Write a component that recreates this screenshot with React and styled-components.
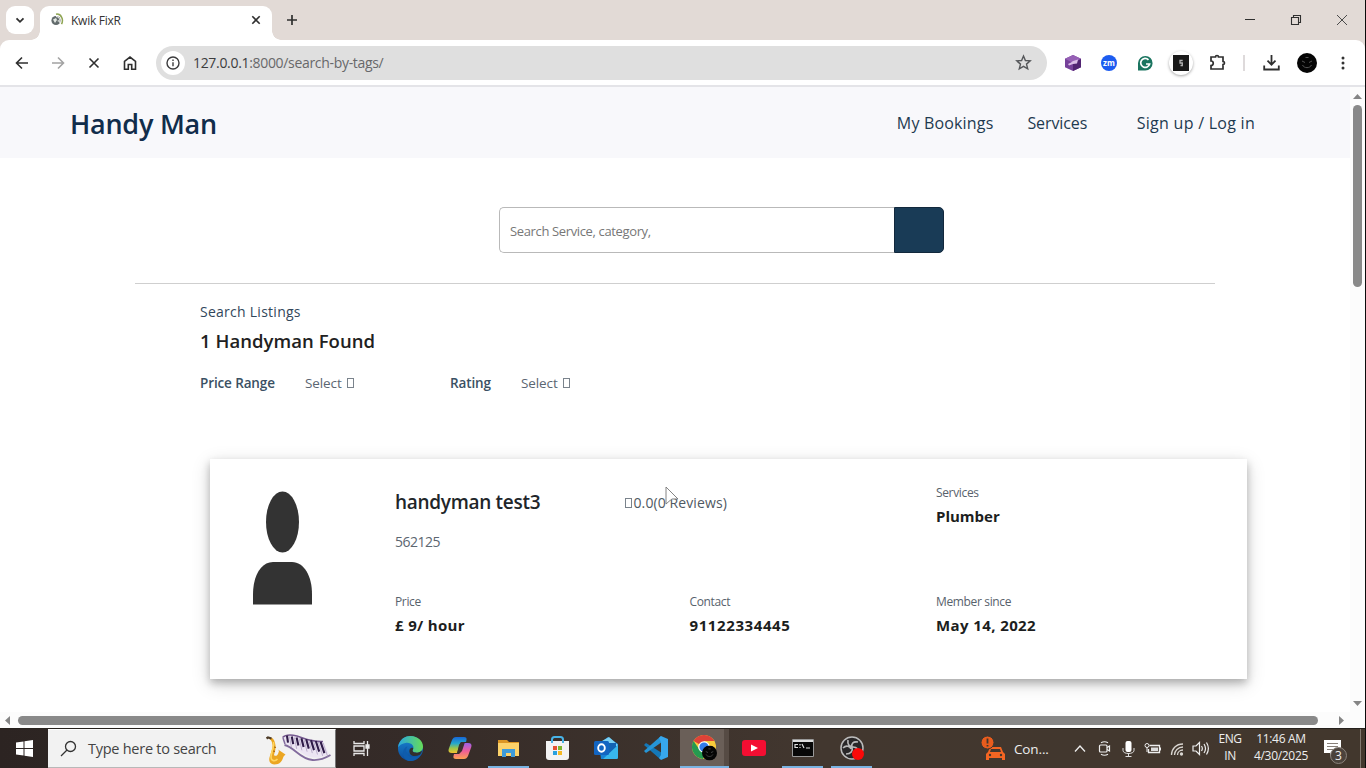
import React from "react";
import styled, { createGlobalStyle } from "styled-components";

const Global = createGlobalStyle`
  * { box-sizing: border-box; }
  body { margin: 0; overflow: hidden; background: #fff; }
  svg { display: block; flex: none; }
`;

const Desktop = styled.div`
  width: 1366px;
  height: 768px;
  display: flex;
  flex-direction: column;
  overflow: hidden;
  border-right: 1px solid #0b0b0b;
  font-family: "Open Sans", "Noto Sans", sans-serif;
  color: #222;
`;

/* ---------- browser chrome ---------- */
const TabStrip = styled.div`
  height: 40px;
  flex: none;
  display: flex;
  background: #e2dad6;
`;
const TabSearch = styled.div`
  width: 28px;
  height: 28px;
  margin: 6px 6px 0;
  border-radius: 9px;
  background: #fff;
  display: grid;
  place-items: center;
`;
const Tab = styled.div`
  position: relative;
  width: 232px;
  height: 34px;
  margin-top: 6px;
  padding: 0 10px 6px 10px;
  border-radius: 9px 9px 0 0;
  background: #fff;
  display: flex;
  align-items: center;
  &::before, &::after {
    content: "";
    position: absolute;
    bottom: 0;
    width: 9px;
    height: 9px;
  }
  &::before { left: -9px; background: radial-gradient(circle at 0 0, transparent 8.5px, #fff 9px); }
  &::after { right: -9px; background: radial-gradient(circle at 100% 0, transparent 8.5px, #fff 9px); }
`;
const TabTitle = styled.div`
  flex: 1;
  margin-left: 7px;
  font-size: 12px;
  letter-spacing: -0.25px;
  color: #333;
`;
const NewTab = styled.div`
  width: 40px;
  display: grid;
  place-items: center;
`;
const WindowButtons = styled.div`
  margin-left: auto;
  display: flex;
`;
const WindowButton = styled.div`
  width: 46px;
  height: 40px;
  display: grid;
  place-items: center;
`;
const ToolbarBack = styled.div`
  flex: none;
  background: #e2dad6;
`;
const Toolbar = styled.div`
  height: 47px;
  padding: 0 4px;
  display: flex;
  align-items: center;
  background: #fff;
  border-radius: 9px 9px 0 0;
  border-bottom: 2px solid #e4e4e8;
`;
const ToolCell = styled.div`
  width: 36px;
  height: 36px;
  display: grid;
  place-items: center;
`;
const Omnibox = styled.div`
  width: 891px;
  height: 34px;
  margin: 0 8px;
  padding: 0 15px 0 5px;
  border-radius: 17px;
  background: #dfdfdf;
  display: flex;
  align-items: center;
`;
const SiteInfo = styled.div`
  width: 24px;
  height: 24px;
  border-radius: 50%;
  background: #fff;
  display: grid;
  place-items: center;
`;
const Url = styled.div`
  flex: 1;
  margin-left: 8px;
  font-size: 14px;
  letter-spacing: -0.32px;
  color: #68686a;
  span { color: #3c3c3e; }
`;
const ToolDivider = styled.div`
  width: 2px;
  height: 16px;
  margin: 0 8px;
  background: #dedadb;
`;
const ShadowDisc = styled.div`
  width: 24px;
  height: 24px;
  border-radius: 50%;
  box-shadow: 0 1px 3px rgba(0, 0, 0, 0.35);
  display: grid;
  place-items: center;
`;

/* ---------- page ---------- */
const Viewport = styled.div`
  flex: 1;
  min-height: 0;
  display: grid;
  grid-template: 1fr 16px / 1fr 15px;
`;
const Page = styled.main`
  background: #fff;
  overflow: hidden;
`;
const VScroll = styled.div`
  display: flex;
  flex-direction: column;
  align-items: center;
  padding: 5px 0 4px;
  background: #fcfcfc;
`;
const VThumb = styled.div`
  width: 9px;
  height: 182px;
  margin: 4px 0 auto;
  border-radius: 5px;
  background: #898989;
`;
const HScroll = styled.div`
  grid-column: 1 / -1;
  display: flex;
  align-items: center;
  padding: 0 20px 0 4px;
  background: #fcfcfc;
`;
const HThumb = styled.div`
  width: 1300px;
  height: 9px;
  margin: 0 auto 0 5px;
  border-radius: 5px;
  background: #898989;
`;
const SiteHeader = styled.header`
  height: 71px;
  padding: 0 95px 0 70px;
  display: flex;
  align-items: center;
  background: #f8f8fb;
`;
const Brand = styled.div`
  margin-right: auto;
  padding-top: 3px;
  font-size: 27px;
  line-height: 36px;
  font-weight: 600;
  letter-spacing: -0.25px;
  color: #112d4b;
`;
const NavLink = styled.div`
  margin-left: ${(p) => p.$gap || 0}px;
  font-size: 16px;
  letter-spacing: ${(p) => p.$track}px;
  color: #1e3a50;
`;
const SearchRow = styled.div`
  display: flex;
  width: 445px;
  height: 46px;
  margin: 49px 0 30px 499px;
`;
const SearchField = styled.div`
  flex: 1;
  padding: 2px 0 0 10px;
  border: 1px solid #b9b9b9;
  border-right: 0;
  border-radius: 5px 0 0 5px;
  display: flex;
  align-items: center;
  font-size: 13px;
  letter-spacing: -0.36px;
  color: #777;
`;
const SearchButton = styled.div`
  width: 50px;
  border: 1px solid #12283c;
  border-radius: 0 5px 5px 0;
  background: #193b56;
`;
const Rule = styled.div`
  height: 1px;
  margin: 0 135px;
  background: #cfcfcf;
`;
const Listing = styled.section`
  padding: 17px 0 0 200px;
`;
const Caption = styled.div`
  font-size: 14px;
  line-height: 22px;
  font-weight: 500;
  letter-spacing: 0.26px;
  color: #32475b;
`;
const Found = styled.div`
  margin-top: 5px;
  font-size: 18.5px;
  line-height: 26px;
  font-weight: 600;
  letter-spacing: 0.05px;
  color: #212121;
`;
const Filters = styled.div`
  margin-top: 18px;
  display: flex;
  line-height: 20px;
`;
const Filter = styled.div`
  width: ${(p) => p.$width}px;
  padding-top: ${(p) => p.$drop || 0}px;
  display: flex;
  align-items: center;
`;
const FilterName = styled.div`
  font-size: 13.5px;
  font-weight: 600;
  width: ${(p) => p.$width}px;
  letter-spacing: -0.12px;
  color: #3a5063;
`;
const FilterValue = styled.div`
  display: flex;
  align-items: center;
  gap: 5px;
  font-size: 13.5px;
  letter-spacing: -0.1px;
  color: #5b6672;
`;
const MissingGlyph = styled.i`
  width: 7px;
  height: 10px;
  border: 1px solid #7a838c;
`;
const Card = styled.article`
  width: 1037px;
  height: 220px;
  margin: 66px 0 0 10px;
  padding: 25px 0 0 43px;
  display: flex;
  background: #fff;
  box-shadow: 0 4px 8px rgba(0, 0, 0, 0.24), 0 5px 18px rgba(0, 0, 0, 0.16);
`;
const Avatar = styled.div`
  width: 142px;
  padding-top: 7px;
`;
const Details = styled.div`
  flex: 1;
`;
const DetailRow = styled.div`
  display: flex;
  height: ${(p) => p.$height}px;
`;
const Cell = styled.div`
  width: ${(p) => p.$width}px;
`;
const Name = styled.div`
  padding-top: 5px;
  font-size: 19px;
  line-height: 26px;
  font-weight: 600;
  letter-spacing: -0.3px;
  color: #212529;
`;
const Postcode = styled.div`
  margin-top: 17px;
  font-size: 14px;
  line-height: 20px;
  letter-spacing: -0.5px;
  color: #5c6670;
`;
const Reviews = styled.div`
  padding-top: 9px;
  display: flex;
  align-items: center;
  font-size: 14px;
  line-height: 20px;
  letter-spacing: 0.1px;
  color: #4f5963;
`;
const Label = styled.div`
  font-size: 12px;
  line-height: 18px;
  letter-spacing: -0.35px;
  color: #58626c;
`;
const Value = styled.div`
  margin-top: 3px;
  font-size: 15px;
  line-height: 22px;
  font-weight: 700;
  letter-spacing: ${(p) => p.$track || 0}px;
  color: #1c1e20;
`;
const Pointer = styled.div`
  position: absolute;
  left: 665px;
  top: 486px;
`;

/* ---------- taskbar ---------- */
const Taskbar = styled.footer`
  height: 40px;
  flex: none;
  display: flex;
  background: linear-gradient(90deg, #2c2422 0, #352b28 30%, #42372f 60%, #42372d 100%);
  border-top: 1px solid #26211d;
  color: #eee;
`;
const StartButton = styled.div`
  width: 48px;
  display: grid;
  place-items: center;
`;
const TaskSearch = styled.div`
  width: 288px;
  margin-right: 1px;
  padding: 0 4px 0 12px;
  display: flex;
  align-items: center;
  background: #f2f2f2;
  border-top: 1px solid #fff;
  border-bottom: 1px solid #b8b8b8;
  border-right: 1px solid #777;
`;
const TaskSearchText = styled.div`
  flex: 1;
  margin-left: 11px;
  font-size: 14.5px;
  letter-spacing: -0.26px;
  color: #444;
`;
const TaskItem = styled.div`
  width: 49px;
  padding: 0 4px 1px;
  display: grid;
  place-items: center;
  background: ${(p) => (p.$active ? "linear-gradient(90deg, #6a5f58 44px, #564b44 44px)" : "transparent")};
  box-shadow: ${(p) => (p.$active ? "inset 0 -2px #79b3e2" : "none")};
`;
const RunningItem = styled(TaskItem)`
  background: linear-gradient(#79b3e2, #79b3e2) 4px bottom / 41px 2px no-repeat;
`;
const Tray = styled.div`
  margin-left: auto;
  display: flex;
  align-items: center;
`;
const News = styled.div`
  width: 87px;
  display: flex;
  align-items: center;
  gap: 8px;
  font-size: 13.5px;
  letter-spacing: -0.1px;
`;
const TrayIcon = styled.div`
  width: 24.2px;
  display: grid;
  place-items: center;
`;
const TrayText = styled.div`
  width: ${(p) => p.$width}px;
  padding-bottom: 3px;
  text-align: center;
  font-size: 12px;
  line-height: 17.5px;
  letter-spacing: ${(p) => p.$track}px;
  white-space: pre;
`;
const Notices = styled.div`
  position: relative;
  width: 45px;
  padding-right: 11px;
  display: grid;
  place-items: center;
`;
const NoticeCount = styled.span`
  position: absolute;
  left: 15px;
  top: 7px;
  width: 17px;
  height: 17px;
  border-radius: 50%;
  border: 1px solid #8b837c;
  background: #4c433c;
  font-size: 12px;
  line-height: 15px;
  text-align: center;
`;
const ShowDesktop = styled.div`
  width: 5px;
  height: 39px;
  border-left: 1px solid #81786f;
`;

const Line = ({ size = 16, view = 16, color = "#2f2f2f", w = 1.6, children }) => (
  <svg width={size} height={size} viewBox={`0 0 ${view} ${view}`} fill="none" stroke={color} strokeWidth={w}>
    {children}
  </svg>
);
const Triangle = ({ d }) => (
  <svg width="9" height="9" viewBox="0 0 9 9"><path d={d} fill="#858585" /></svg>
);
const Face = ({ size }) => (
  <svg width={size} height={size} viewBox="0 0 20 20">
    <circle cx="10" cy="10" r="10" fill="#050505" />
    <path d="M5 8l3 1.500M15 8l-3 1.500M5.500 12c1.500 3.500 7.500 3.500 9 0M8.500 4.500h3" fill="none" stroke="#5c5c5c" strokeWidth="0.9" />
  </svg>
);

const keys = Array.from({ length: 8 }, (_, i) => i);
const SaxAndPiano = () => (
  <svg width="66" height="34" viewBox="0 0 66 34">
    <path d="M6 5.500c3 1 4 4 4.500 8 .4 4-1 7-1.500 9.500 1 1.500 3 1 4-1l1-3-1-1.500 7.500 5c-1 1-2 1.500-2.500 3.500-1.500 5-5 6.500-8.500 6.500-4 0-6-3-5-7C5.500 21 8 17 7.500 13 7 9.500 6.500 8 4.500 7.500z" fill="#eba622" />
    <path d="M8.500 10c1 5-2.500 11-2.500 15 0 4 4 5 6.500 2" fill="none" stroke="#ffd45e" strokeWidth="1.600" />
    <path d="M1.500 6.500l1.500-1 3.500 1" fill="none" stroke="#4c3a26" strokeWidth="2.200" />
    <path d="M9 15l2 .5M8 19l2 .5" stroke="#a7650e" strokeWidth="1.200" />
    <path d="M17.500 5.500C20 3 26 2.500 32 4c8 2.500 14 6 26 5.500l6 12.500c-10 6-20 4-27-1-6-4-12-8-17-9z" fill="#ece5f3" />
    <path d="M17.500 5.500C20 3 26 2.500 32 4c8 2.500 14 6 26 5.500" fill="none" stroke="#74588e" strokeWidth="1.400" />
    <path d="M19.500 13c10 2 15 14 28 15 8 .5 13-2 18-5" fill="none" stroke="#826b9d" strokeWidth="1.800" />
    <path d="M18 6l2 6" stroke="#826b9d" strokeWidth="1.500" />
    {keys.map((k) => (
      <path key={k} d={`M${22 + k * 4.8} ${3.6 + k * 0.9}l${1 + k * 0.4} ${7 + k * 0.6}`} stroke="#2f1b48" strokeWidth="2.100" />
    ))}
    {keys.map((k) => (
      <path key={`gap-${k}`} d={`M${24.500 + k * 4.8} ${4.500 + k * 0.9}l${2 + k * 0.4} ${11 + k * 0.5}`} stroke="#9a89b0" strokeWidth="0.600" />
    ))}
  </svg>
);

function BrowserTabs() {
  return (
    <TabStrip>
      <TabSearch><Line size={10} view={10} w={1.8}><path d="M1.500 3.300L5 6.800l3.500-3.500" /></Line></TabSearch>
      <Tab>
        <svg width="14" height="14" viewBox="0 0 14 14">
          <circle cx="6" cy="7.500" r="4.600" fill="#626b6c" />
          <path d="M3 6.500l3-1.500 1 2-2 3zM7 8l2-1 .5 2z" fill="#e4e8e3" />
          <path d="M6 1.200c5-.8 8 5 5.500 10" fill="none" stroke="#8fa554" strokeWidth="1.500" />
          <path d="M6 3.600c3 0 4.500 3 3.500 6" fill="none" stroke="#fff" />
        </svg>
        <TabTitle>Kwik FixR</TabTitle>
        <Line size={12} view={12} w={1.6}><path d="M2.300 2.300l7.400 7.400M9.700 2.300L2.300 9.700" /></Line>
      </Tab>
      <NewTab><Line size={12} view={12} w={1.7}><path d="M6 1v10M1 6h10" /></Line></NewTab>
      <WindowButtons>
        <WindowButton><Line size={10} view={10} w={1}><path d="M0 4.500h10" /></Line></WindowButton>
        <WindowButton><Line size={12} view={12} w={1.100}><path d="M1.500 3.500h7v7h-7zM3.500 3.500v-2h7v7h-2" /></Line></WindowButton>
        <WindowButton><Line size={12} view={12} w={1} color="#4b4b4b"><path d="M1 1l10 10M11 1L1 11" /></Line></WindowButton>
      </WindowButtons>
    </TabStrip>
  );
}

function BrowserToolbar() {
  return (
    <ToolbarBack>
      <Toolbar>
        <ToolCell><Line><path d="M14 8H3M8 2.500L2.500 8 8 13.500" /></Line></ToolCell>
        <ToolCell><Line color="#a3a3a3"><path d="M2 8h11M8 2.500L13.500 8 8 13.500" /></Line></ToolCell>
        <ToolCell><Line><path d="M3.500 3.500l9 9M12.500 3.500l-9 9" /></Line></ToolCell>
        <ToolCell><Line><path d="M2.500 6.300L8 2l5.500 4.300v7.900H9.700V9.500H6.300v4.700H2.500z" /></Line></ToolCell>
        <Omnibox>
          <SiteInfo><Line size={14} view={14} color="#3c3c3e" w={1.400}><circle cx="7" cy="7" r="6" /><path d="M7 6.200v4M7 3.600v1.400" /></Line></SiteInfo>
          <Url><span>127.0.0.1</span>:8000/search-by-tags/</Url>
          <Line size={17} view={17} color="#55575a" w={1.400}><path d="M8.500 2l1.900 4.500 4.800.4-3.700 3.200 1.200 4.700-4.200-2.500-4.200 2.500 1.200-4.700L1.800 6.900l4.800-.4z" /></Line>
        </Omnibox>
        <ToolCell>
          <svg width="16" height="16" viewBox="0 0 16 16">
            <path d="M8 0l8 3.800v8.400L8 16l-8-3.800V3.800z" fill="#76419a" />
            <path d="M8 0l8 3.800L8 8 0 3.800z" fill="#9660b5" /><path d="M8 8l8-4v8.200L8 16z" fill="#512472" />
            <path d="M3 9l3-1.500 2-1.500 5-1.500-1 4-4 .5-4 1.500z" fill="#d9bce6" />
          </svg>
        </ToolCell>
        <ToolCell>
          <svg width="16" height="16" viewBox="0 0 16 16">
            <circle cx="8" cy="8" r="8" fill="#1d5cf0" />
            <text x="8" y="10.500" textAnchor="middle" fontSize="8" fontWeight="700" fill="#fff" fontFamily="Open Sans">zm</text>
          </svg>
        </ToolCell>
        <ToolCell>
          <svg width="16" height="16" viewBox="0 0 16 16">
            <path d="M1 15.500V8a7.300 7.300 0 1 1 7.300 7.500z" fill="#1b7560" />
            <path d="M11.500 4.800A4.500 4.500 0 1 0 12.600 9H9" fill="none" stroke="#fff" strokeWidth="1.700" />
          </svg>
        </ToolCell>
        <ToolCell>
          <ShadowDisc>
            <svg width="16" height="16" viewBox="0 0 16 16"><path d="M0 0h16v16H0z" fill="#191919" /><path d="M9.700 5.500H7v2.500H9.300V10.500H7.500" fill="none" stroke="#b2b2b2" strokeWidth="1.300" /></svg>
          </ShadowDisc>
        </ToolCell>
        <ToolCell><Line size={17} view={17} w={1.700}><path d="M2 3h4.500a1.500 1.500 0 0 1 3 0H14v4.500a1.500 1.500 0 0 1 0 3V15H2v-3.500a2.200 2.200 0 0 0 0-4.500z" /></Line></ToolCell>
        <ToolDivider />
        <ToolCell><Line size={17} view={17} w={1.800}><path d="M8.500 1v9.500M4.500 6.700l4 4 4-4M1.200 11.500v4h14.600v-4" /></Line></ToolCell>
        <ToolCell><Face size={20} /></ToolCell>
        <ToolCell><svg width="4" height="16" viewBox="0 0 4 16" fill="#333"><circle cx="2" cy="3" r="1.500" /><circle cx="2" cy="8" r="1.500" /><circle cx="2" cy="13" r="1.500" /></svg></ToolCell>
      </Toolbar>
    </ToolbarBack>
  );
}

function HandymanCard() {
  return (
    <Card>
      <Avatar>
        <svg width="60" height="114" viewBox="0 0 60 114" fill="#333">
          <ellipse cx="29.500" cy="31" rx="16.500" ry="30.500" />
          <path d="M0 113.500V103C0 85 8 71 20 71h19c12 0 20 14 20 32v10.500z" />
        </svg>
      </Avatar>
      <Details>
        <DetailRow $height={109}>
          <Cell $width={230}>
            <Name>handyman test3</Name>
            <Postcode>562125</Postcode>
          </Cell>
          <Cell $width={311}>
            <Reviews><MissingGlyph />&#8202;0.0(0 Reviews)</Reviews>
          </Cell>
          <Cell>
            <Label>Services</Label>
            <Value>Plumber</Value>
          </Cell>
        </DetailRow>
        <DetailRow $height={60}>
          <Cell $width={294.5}>
            <Label>Price</Label>
            <Value $track={0.33}>£ 9/ hour</Value>
          </Cell>
          <Cell $width={246.5}>
            <Label>Contact</Label>
            <Value $track={0.6}>91122334445</Value>
          </Cell>
          <Cell>
            <Label>Member since</Label>
            <Value $track={0.4}>May 14, 2022</Value>
          </Cell>
        </DetailRow>
      </Details>
    </Card>
  );
}

function Site() {
  return (
    <Page>
      <SiteHeader>
        <Brand>Handy Man</Brand>
        <NavLink $track={0.17}>My Bookings</NavLink>
        <NavLink $gap={34} $track={-0.1}>Services</NavLink>
        <NavLink $gap={49.5} $track={0.27}>Sign up / Log in</NavLink>
      </SiteHeader>
      <SearchRow>
        <SearchField>Search Service, category,</SearchField>
        <SearchButton />
      </SearchRow>
      <Rule />
      <Listing>
        <Caption>Search Listings</Caption>
        <Found>1 Handyman Found</Found>
        <Filters>
          <Filter $width={250}>
            <FilterName $width={105}>Price Range</FilterName>
            <FilterValue>Select <MissingGlyph /></FilterValue>
          </Filter>
          <Filter $width={200} $drop={1}>
            <FilterName $width={71}>Rating</FilterName>
            <FilterValue>Select <MissingGlyph /></FilterValue>
          </Filter>
        </Filters>
        <HandymanCard />
      </Listing>
    </Page>
  );
}

function TaskApps() {
  return (
    <>
      <TaskItem>
        <Line size={17} view={17} color="#e8e8e8" w={1.300}><path d="M1 1v2.500h10V1M1 6h10v5H1zM1 16v-2.500h10V16M14.500 1v15" /><path d="M13 5h3v3h-3z" fill="#eee" /></Line>
      </TaskItem>
      <TaskItem>
        <svg width="25" height="25" viewBox="0 0 24 24">
          <defs>
            <linearGradient id="edgeTop"><stop stopColor="#2aa7e0" /><stop offset="1" stopColor="#66dc58" /></linearGradient>
            <linearGradient id="edgeLow" x2="0" y2="1"><stop stopColor="#1887d4" /><stop offset="1" stopColor="#0c4b9b" /></linearGradient>
          </defs>
          <circle cx="12" cy="12" r="12" fill="url(#edgeLow)" />
          <path d="M0 11C1 3 7 0 12 0c7 0 12 5 12 10 0 4-3 6-6 6-3 0-5-1-3.500-3.500C16 10 13 6 8 6.500 4 7 1 9 0 11z" fill="url(#edgeTop)" />
          <path d="M9 10c-3 4 0 10 5 10 4 0 6-1 8-2.500-2 4-6 6.500-10 6.500-5 0-8-5-7-9 .6-3 2-4.500 4-5z" fill="#0f5cac" />
          <path d="M14.500 12.500C13 15 15 16 18 16c2 0 4-1 5-2-.3 2-1 3-2 4-4 2-8 1.500-9.500-1-1.200-2.500-.5-5 1-5.500 1.500-.4 2.500.2 2 1z" fill="#33302d" />
        </svg>
      </TaskItem>
      <TaskItem>
        <svg width="24" height="22" viewBox="0 0 24 22">
          <defs>
            <linearGradient id="pilotLeft" x2="0" y2="1"><stop stopColor="#1767d8" /><stop offset=".4" stopColor="#24a7ce" /><stop offset=".7" stopColor="#9bc64c" /><stop offset="1" stopColor="#f2c12e" /></linearGradient>
            <linearGradient id="pilotRight" x2="0" y2="1"><stop stopColor="#9a61e8" /><stop offset=".5" stopColor="#ef5d98" /><stop offset="1" stopColor="#fca052" /></linearGradient>
          </defs>
          <path d="M8 0h8c2 0 3 1 2.500 3L18 5h-3c-2 0-3 1-3.500 3L9 16H4c-3 0-4-1.500-3.300-4L4 3C5 1 6 0 8 0z" fill="url(#pilotLeft)" />
          <path d="M16 22H8c-2 0-3-1-2.500-3L6 17h3c2 0 3-1 3.500-3L15 6h5c3 0 4 1.500 3.300 4L20 19c-1 2-2 3-4 3z" fill="url(#pilotRight)" />
          <path d="M11 8l2-3h4l-3 9-3 3H9z" fill="#3b302e" />
        </svg>
      </TaskItem>
      <RunningItem>
        <svg width="23" height="20" viewBox="0 0 23 20">
          <path d="M1 2h9l2 2h10v4H1z" fill="#dc9624" /><path d="M1 5h21v13H1z" fill="#fcd26a" />
          <path d="M5 19v-8h13v8h-4v-4H9v4z" fill="#3e9bda" />
        </svg>
      </RunningItem>
      <TaskItem>
        <svg width="25" height="25" viewBox="0 0 25 25">
          <path d="M7 7V3.500C7 1.500 8 1 9.500 1h6C17 1 18 1.500 18 3.500V7" fill="none" stroke="#48b4e8" strokeWidth="2" />
          <path d="M1 5h23v16c0 2-1 3-3 3H4c-2 0-3-1-3-3z" fill="#f3f3f3" />
          <path d="M7 5v2M18 5v2" stroke="#48b4e8" strokeWidth="2" />
          <path d="M8 10h4v4H8z" fill="#e45232" /><path d="M13 10h4v4h-4z" fill="#7eb72f" /><path d="M8 15h4v4H8z" fill="#28a1df" /><path d="M13 15h4v4h-4z" fill="#f6b923" />
        </svg>
      </TaskItem>
      <TaskItem>
        <svg width="25" height="24" viewBox="0 0 25 24">
          <path d="M5 8l9-7 10 7v13c0 2-1 2-3 2H7z" fill="#1683d7" /><path d="M8 5l7-4 9 8-7 6z" fill="#7bd2f5" />
          <path d="M12 7h10v8l-7 4z" fill="#1264b4" /><path d="M24 9v12c0 2-1 2-3 2H9z" fill="#38b7ed" />
          <rect y="5" width="15" height="14" rx="1.500" fill="#1265c2" /><ellipse cx="7.500" cy="12" rx="3.300" ry="3.700" fill="none" stroke="#fff" strokeWidth="1.900" />
        </svg>
      </TaskItem>
      <TaskItem>
        <svg width="24" height="24" viewBox="0 0 24 24">
          <path d="M2 7L0 9l16 14 2-6z" fill="#1478b8" /><path d="M2 17l-2-2L17 0l1 6z" fill="#2695d6" />
          <path d="M17 0l7 3v18l-7 3-2-2 2-3V6l-2-4z" fill="#37a7ed" />
        </svg>
      </TaskItem>
      <TaskItem $active>
        <svg width="25" height="26" viewBox="0 0 25 26">
          <circle cx="12" cy="12" r="12" fill="#f8cb3b" />
          <path d="M12 12L1.600 6A12 12 0 0 1 22.400 6H12z" fill="#de4238" /><path d="M1.600 6A12 12 0 0 0 11 24l5-9.500L7 14z" fill="#259a50" />
          <circle cx="12" cy="12" r="5.800" fill="#fff" /><circle cx="12" cy="12" r="4.600" fill="#337ce9" />
          <g transform="translate(10 10.500)"><Face size={15} /></g>
        </svg>
      </TaskItem>
      <TaskItem>
        <svg width="24" height="16" viewBox="0 0 24 16"><rect width="24" height="16" rx="3" fill="#f40e32" /><path d="M9 4.500l7 3.500-7 3.500z" fill="#fff" /></svg>
      </TaskItem>
      <RunningItem>
        <svg width="22" height="18" viewBox="0 0 22 18"><path d="M.5.500h21v17H.5z" fill="#080808" stroke="#999" /><path d="M1 1h20v2H1z" fill="#ddd" /><path d="M6 5.500H3v3h3M8 5v1.500M8 8v1M10 5l2 4M14 9h4" fill="none" stroke="#ddd" strokeWidth="1.200" /></svg>
      </RunningItem>
      <RunningItem>
        <svg width="24" height="24" viewBox="0 0 24 24">
          <circle cx="12" cy="12" r="11" fill="#292728" stroke="#bcbcbc" strokeWidth="1.500" />
          <path d="M8 4c-1 5 2 7 5 7 4 0 6 3 5 6M18 6c-5-1-7 2-6 5 1 4-1 7-6 7M3 12c3-3 7-2 8 1" fill="none" stroke="#b9b9b9" strokeWidth="1.700" />
          <circle cx="18" cy="18" r="6" fill="#fb0909" />
        </svg>
      </RunningItem>
    </>
  );
}

function SystemTray() {
  return (
    <Tray>
      <News>
        <svg width="25" height="25" viewBox="0 0 25 25">
          <path d="M5 24v-6l2-2 2-5h11l2 5 2 2v6h-3v-2H8v2z" fill="#f46522" /><path d="M10 13h9l1 3H9z" fill="#42372e" />
          <circle cx="9" cy="19" r="1.200" fill="#42372e" /><circle cx="20" cy="19" r="1.200" fill="#42372e" />
          <circle cx="6.500" cy="6.500" r="6.500" fill="#e95c1d" stroke="#42372e" strokeWidth="1" /><path d="M6.500 2.500v5M6.500 9v1.500" stroke="#42372e" strokeWidth="1.800" />
        </svg>
        Con...
      </News>
      <TrayIcon><Line size={12} view={12} color="#eee" w={1.300}><path d="M1 8.500l5-5.500 5 5.500" /></Line></TrayIcon>
      <TrayIcon><Line size={15} view={15} color="#eee" w={1.200}><rect x="2.500" y="4" width="7.500" height="7" rx="1" /><path d="M10 6.500L12.500 5v5L10 8.500M4 1.800c2-1.200 5-1.200 7 0M4 13.200c2 1.200 5 1.200 7 0" /></Line></TrayIcon>
      <TrayIcon><svg width="13" height="16" viewBox="0 0 13 16"><rect x="3.500" width="6" height="11" rx="2" fill="#fff" /><path d="M1 7v2.500c0 4 11 4 11 0V7M6.500 12v4M3.500 15.500h6" fill="none" stroke="#ddd" /></svg></TrayIcon>
      <TrayIcon><svg width="17" height="13" viewBox="0 0 17 13"><path d="M5.500 3.500h10v7H4.500V7" fill="none" stroke="#eee" strokeWidth="1.300" /><path d="M7 5.500h7v3.500H7z" fill="#ddd" /><circle cx="3" cy="3.500" r="2" fill="#42372e" stroke="#eee" /><path d="M3 5v5M16.500 5.500v3" stroke="#eee" /></svg></TrayIcon>
      <TrayIcon><Line size={14} view={14} color="#d9d5d0" w={1.300}><path d="M1.500 13C1.500 7 6 2 13 2M4.500 13c0-4 3.500-8 8.500-8M7.500 13c0-3 2.500-5 5.500-5" /><circle cx="11.500" cy="12" r="1" fill="#fff" /></Line></TrayIcon>
      <TrayIcon><Line size={17} view={17} color="#eee" w={1.200}><path d="M1 6h3l3.500-3.500v12L4 11H1zM9.500 6c1 1.500 1 3.500 0 5M12 4c2 3 2 6 0 9M14.500 2.500c2.500 4 2.500 8 0 12" /></Line></TrayIcon>
      <TrayText $width={34} $track={-0.45}>{"ENG\nIN"}</TrayText>
      <TrayText $width={68} $track={-0.3}>{"11:46 AM\n4/30/2025"}</TrayText>
      <Notices>
        <svg width="17" height="17" viewBox="0 0 17 17"><path d="M0 0h17v13H9l-3 3.500V13H0z" fill="#fff" /><path d="M3 3.500h11M3 6.500h11M3 9.500h8" stroke="#888079" /></svg>
        <NoticeCount>3</NoticeCount>
      </Notices>
      <ShowDesktop />
    </Tray>
  );
}

export default function App() {
  return (
    <Desktop>
      <Global />
      <BrowserTabs />
      <BrowserToolbar />
      <Viewport>
        <Site />
        <VScroll>
          <Triangle d="M0 7l4.500-5L9 7z" />
          <VThumb />
          <Triangle d="M0 2l4.500 5L9 2z" />
        </VScroll>
        <HScroll>
          <Triangle d="M6 0L1 4.500 6 9z" />
          <HThumb />
          <Triangle d="M3 0l5 4.500L3 9z" />
        </HScroll>
      </Viewport>
      <Taskbar>
        <StartButton>
          <svg width="17" height="17" viewBox="0 0 17 17" fill="#fff"><path d="M0 2.500l7.500-1.100V8H0zM8.500 1.200L17 0v8H8.500zM0 9h7.500v6.600L0 14.500zM8.500 9H17v8l-8.500-1.200z" /></svg>
        </StartButton>
        <TaskSearch>
          <Line size={17} view={17} color="#333" w={1.300}><circle cx="10.500" cy="6.500" r="5" /><path d="M7 10L1 16" /></Line>
          <TaskSearchText>Type here to search</TaskSearchText>
          <SaxAndPiano />
        </TaskSearch>
        <TaskApps />
        <SystemTray />
      </Taskbar>
      <Pointer>
        <svg width="15" height="21" viewBox="0 0 15 21"><path d="M1 1l12 12H7.500L5 14.500 1 18z" fill="#fff" fillOpacity=".9" stroke="#777" strokeWidth="0.900" /></svg>
      </Pointer>
    </Desktop>
  );
}
